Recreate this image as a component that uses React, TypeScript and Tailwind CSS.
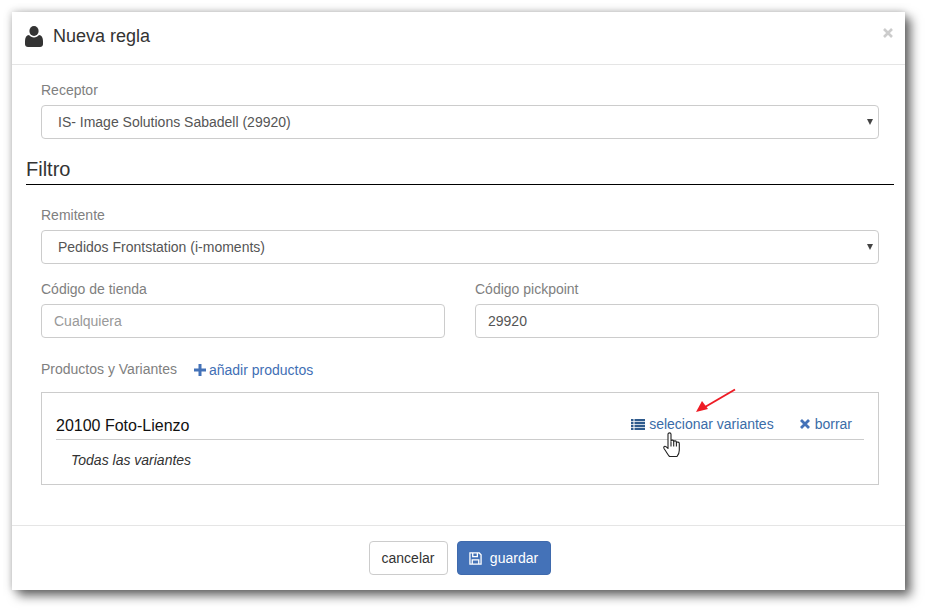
function UserIcon() {
  return (
    <svg viewBox="0 0 18 21" className="w-[18px] h-[21px] text-[#333]" fill="currentColor">
      <ellipse cx="9" cy="5" rx="4.600" ry="5" />
      <path d="M4 9C5.200 10.600 7 11.400 9 11.400s3.800-.8 5-2.400C16.600 9.400 18 11.500 18 15v3.300C18 19.800 16.800 21 15 21H3c-1.800 0-3-1.200-3-2.700V15C0 11.500 1.400 9.400 4 9z" />
    </svg>
  );
}

function SelectField({ label, value }: { label: string; value: string }) {
  return (
    <div>
      <label className="block h-[20px] leading-[20px] mb-[5px] text-[14px] text-[#808080]">{label}</label>
      <div className="h-[34px] pl-[16px] pr-[5px] flex items-center justify-between bg-white border border-[#ccc] rounded-[4px] text-[14px] text-[#555]">
        <span>{value}</span>
        <span className="w-0 h-0 border-x-[3px] border-x-transparent border-t-[6px] border-t-[#444]" />
      </div>
    </div>
  );
}

function TextField({ label, value, placeholder }: { label: string; value?: string; placeholder?: string }) {
  return (
    <div className="flex-1">
      <label className="block h-[20px] leading-[20px] mb-[5px] text-[14px] text-[#808080]">{label}</label>
      <div className={`h-[34px] px-[12px] flex items-center bg-white border border-[#ccc] rounded-[4px] text-[14px] ${value ? 'text-[#555]' : 'text-[#999]'}`}>
        {value || placeholder}
      </div>
    </div>
  );
}

export default function App() {
  return (
    <div className="w-[925px] h-[610px] bg-white p-[12px] overflow-hidden font-['Liberation_Sans',Arial,sans-serif]">
      <div className="relative w-[893px] h-[578px] bg-white flex flex-col shadow-[6px_6px_10px_rgba(0,0,0,0.55),0_0_8px_rgba(0,0,0,0.25)]">
        <div className="h-[53px] shrink-0 border-b border-[#e5e5e5] pl-[13px] pr-[12px] pb-[4px] flex items-center gap-[10px]">
          <UserIcon />
          <h4 className="text-[18px] text-[#333] flex-1">Nueva regla</h4>
          <svg viewBox="0 0 10 10" className="w-[10px] h-[10px] -mt-[7px] text-[#ccc]" stroke="currentColor" strokeWidth="2.600">
            <path d="M1 1l8 8M9 1l-8 8" />
          </svg>
        </div>

        <div className="flex-1 pl-[14px] pr-[11px] pt-[15px]">
          <div className="px-[15px]">
            <SelectField label="Receptor" value="IS- Image Solutions Sabadell (29920)" />
          </div>

          <h3 className="mt-[16px] h-[30px] leading-[29px] text-[20px] text-[#333] border-b border-black">Filtro</h3>

          <div className="px-[15px] pt-[20px]">
            <SelectField label="Remitente" value="Pedidos Frontstation (i-moments)" />
            <div className="flex gap-[30px] mt-[15px]">
              <TextField label="Código de tienda" placeholder="Cualquiera" />
              <TextField label="Código pickpoint" value="29920" />
            </div>

            <div className="flex items-center mt-[21px] h-[20px] text-[14px]">
              <span className="text-[#808080]">Productos y Variantes</span>
              <a className="ml-[17px] mt-[2px] flex items-center text-[#3f6fb5]">
                <svg viewBox="0 0 12 12" className="w-[12px] h-[12px] mr-[3px] text-[#4472b8]" fill="currentColor">
                  <path d="M4.500 0h3v4.500H12v3H7.500V12h-3V7.500H0v-3h4.500z" />
                </svg>
                añadir productos
              </a>
            </div>

            <div className="mt-[13px] h-[93px] border border-[#ccc] px-[14px] pt-[15px]">
              <div className="h-[32px] flex items-center justify-between border-b border-[#ccc] pr-[12px]">
                <span className="text-[16px] text-[#111] mt-[4px]">20100 Foto-Lienzo</span>
                <div className="flex items-center text-[14px] text-[#3a6ca8] mt-[1px]">
                  <a className="flex items-center">
                    <svg viewBox="0 0 14 11" className="w-[14px] h-[11px] mr-[4px] text-[#2e5a8c]" fill="currentColor">
                      <path d="M0 0h2.500v2.300H0zM3.500 0H14v2.300H3.500zM0 3h2.500v2.300H0zM3.500 3H14v2.300H3.500zM0 6h2.500v2.300H0zM3.500 6H14v2.300H3.500zM0 9h2.500v2H0zM3.500 9H14v2H3.500z" />
                    </svg>
                    selecionar variantes
                  </a>
                  <a className="flex items-center ml-[26px]">
                    <svg viewBox="0 0 10 10" className="w-[10px] h-[10px] mr-[5px] text-[#4472b8]" stroke="currentColor" strokeWidth="2.800">
                      <path d="M1 1l8 8M9 1l-8 8" />
                    </svg>
                    borrar
                  </a>
                </div>
              </div>
              <p className="pl-[15px] mt-[10px] text-[14px] italic text-[#333]">Todas las variantes</p>
            </div>
          </div>
        </div>

        <div className="h-[65px] shrink-0 border-t border-[#e5e5e5] pt-[15px] pl-[2px] flex justify-center gap-[9px]">
          <button className="w-[79px] h-[34px] border border-[#ccc] rounded-[4px] bg-white text-[14px] text-[#333]">cancelar</button>
          <button className="w-[94px] h-[34px] rounded-[4px] bg-[#4472b8] border border-[#3f6aad] text-[14px] text-white flex items-center justify-center gap-[8px]">
            <svg viewBox="0 0 14 14" className="w-[13px] h-[13px]" fill="none" stroke="currentColor" strokeWidth="1.400">
              <path d="M1 1h10l2 2v10H1z" />
              <path d="M4 1v4h5V1M3.500 13V8.500h7V13" />
            </svg>
            guardar
          </button>
        </div>

        {/* red arrow and hand cursor drawn over the row */}
        <svg viewBox="0 0 44 26" className="absolute left-[683px] top-[376px] w-[44px] h-[26px]">
          <path d="M40 1.500L10 19" stroke="#ee1c25" strokeWidth="2" fill="none" />
          <path d="M1 24l6-11 6 8z" fill="#ee1c25" />
        </svg>
        <svg viewBox="0 0 19 26" className="absolute left-[651px] top-[420px] w-[19px] h-[26px]" fill="white" stroke="#222" strokeWidth="1.100" strokeLinejoin="round">
          <path d="M5 2.200c0-1.800 3-1.800 3 0v6.800c.3-1.300 2.700-1.200 2.700.2v.5c.3-1.200 2.700-1 2.700.3v.7c.4-1 2.900-.8 2.900.7v6.800c0 3-1.300 5-2.300 6.300H6.500C5 23 3.500 20 1.300 17c-1-1.500-.5-2.700.7-2.700 1 0 1.800 1 3 2.200z" />
          <path d="M8 9.500v5M10.700 9.500v5M13.400 10.500v4" fill="none" />
        </svg>
      </div>
    </div>
  );
}
